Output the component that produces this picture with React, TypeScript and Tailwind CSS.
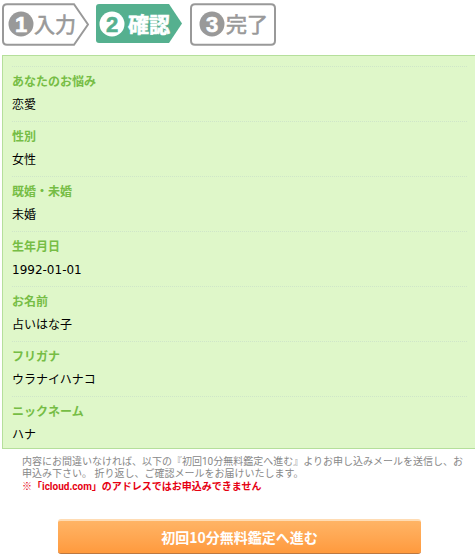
const fields = [
  { label: 'あなたのお悩み', value: '恋愛' },
  { label: '性別', value: '女性' },
  { label: '既婚・未婚', value: '未婚' },
  { label: '生年月日', value: '1992-01-01' },
  { label: 'お名前', value: '占いはな子' },
  { label: 'フリガナ', value: 'ウラナイハナコ' },
  { label: 'ニックネーム', value: 'ハナ' },
]

const steps = [
  { no: '1', label: '入力', active: false, last: false },
  { no: '2', label: '確認', active: true, last: false },
  { no: '3', label: '完了', active: false, last: true },
]

function Step({ no, label, active, last }: (typeof steps)[number]) {
  const outline = last
    ? 'M6 2.2H82Q86 2.2 86 6.2V38.8Q86 42.8 82 42.8H6Q2 42.8 2 38.8V6.2Q2 2.2 6 2.2Z'
    : 'M6 2.2H73L87 22.5L73 42.8H6Q2 42.8 2 38.8V6.2Q2 2.2 6 2.2Z'
  const filled = 'M4 2H74L87 21.5L74 41H4Q1 41 1 38V5Q1 2 4 2Z'
  const cx = last ? 23 : active ? 17 : 20

  return (
    <li aria-current={active ? 'step' : undefined}>
      <svg width="88" height="44" viewBox="0 0 88 44" className="block">
        <path
          d={active ? filled : outline}
          fill={active ? '#55b08f' : '#fff'}
          stroke={active ? 'none' : '#999'}
          strokeWidth="2"
        />
        <circle cx={cx} cy="22" r="12.5" fill={active ? '#fff' : '#999'} />
        <text
          x={cx}
          y="30"
          textAnchor="middle"
          strokeWidth="0.6"
          className={`font-['Liberation_Sans',sans-serif] text-[22px] font-bold ${
            active ? 'fill-[#55b08f] stroke-[#55b08f]' : 'fill-white stroke-white'
          }`}
        >
          {no}
        </text>
        <text
          x={last ? 37 : 33}
          y="30"
          strokeWidth="0.6"
          className={`text-[21px] ${
            active ? 'fill-white stroke-white font-bold' : 'fill-[#999] stroke-[#999] font-normal'
          }`}
        >
          {label}
        </text>
      </svg>
    </li>
  )
}

export default function App() {
  return (
    <main className="bg-white pt-[2px] font-['DejaVu_Sans','Noto_Sans_CJK_JP',sans-serif] text-xs text-black">
      <ol className="flex gap-[6px] pl-px font-['Noto_Sans_CJK_JP',sans-serif]">
        {steps.map((step) => (
          <Step key={step.no} {...step} />
        ))}
      </ol>

      <dl className="mt-[9px] ml-[2px] border-y border-l border-[#b5df9b] bg-[#dff7c9] pt-[10px] pr-2 pl-[9px]">
        {fields.map((field) => (
          <div
            key={field.label}
            className="border-t border-dotted border-[#cfe5c9] pt-[6px] pb-[7px] last:pb-1"
          >
            <dt className="leading-[18px] font-bold text-[#76bd45]">{field.label}</dt>
            <dd className="pt-[5px] leading-[18px]">{field.value}</dd>
          </div>
        ))}
      </dl>

      <div className="mt-[7px] pr-1 pl-[22px] font-[Roboto,'Noto_Sans_CJK_JP',sans-serif] text-[10px] leading-[12px]">
        <p className="text-[#888]">
          内容にお間違いなければ、以下の『初回10分無料鑑定へ進む』よりお申し込みメールを送信し、お
          <br />
          申込み下さい。 折り返し、ご確認メールをお届けいたします。
        </p>
        <p className="mt-px font-bold text-[#e60012]">
          ※「icloud.com」のアドレスではお申込みできません
        </p>
      </div>

      <div className="mt-[26px] pr-[54px] pb-[2px] pl-[58px]">
        <button
          type="button"
          className="h-[35px] w-full rounded-[3px] border-t-2 border-b border-t-[#ffdcb4] border-b-[#bd7840] bg-linear-to-b from-[#ffb465] to-[#ff9a3d] font-['Noto_Sans_CJK_JP',sans-serif] text-sm leading-5 font-bold text-white"
        >
          初回10分無料鑑定へ進む
        </button>
      </div>
    </main>
  )
}
